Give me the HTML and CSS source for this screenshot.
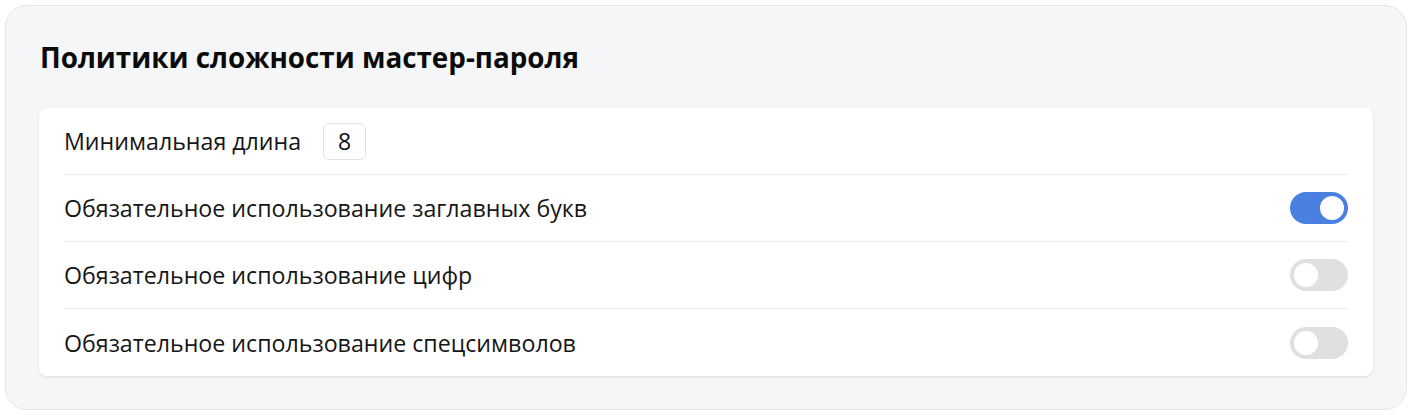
FILE: index.html
```html
<!DOCTYPE html>
<html lang="ru">
<head>
<meta charset="utf-8">
<link rel="stylesheet" href="styles.css">
</head>
<body>
<section class="panel">
  <h2 class="panel-title">Политики сложности мастер-пароля</h2>
  <div class="card">
    <div class="row">
      <span class="label">Минимальная длина</span>
      <span class="num-input">8</span>
    </div>
    <div class="row">
      <span class="label">Обязательное использование заглавных букв</span>
      <span class="toggle on"><span class="knob"></span></span>
    </div>
    <div class="row">
      <span class="label">Обязательное использование цифр</span>
      <span class="toggle"><span class="knob"></span></span>
    </div>
    <div class="row last">
      <span class="label">Обязательное использование спецсимволов</span>
      <span class="toggle"><span class="knob"></span></span>
    </div>
  </div>
</section>
</body>
</html>
```
FILE: styles.css
```css
* { box-sizing: border-box; }
html, body { margin: 0; padding: 0; background: #ffffff; }
body {
  padding: 5px;
  font-family: "Open Sans", "Noto Sans", sans-serif;
  color: #111;
}
.panel {
  width: 1402px;
  height: 405px;
  background: #f5f6f8;
  border: 1px solid #e4e5e8;
  border-radius: 22px;
  padding: 31px 33px 33px 33px;
}
.panel-title {
  margin: 0 0 31px 1px;
  font-size: 27.8px;
  line-height: 40px;
  font-weight: 700;
  color: #0b0b0b;
}
.card {
  background: #fff;
  border-radius: 8px;
  box-shadow: 0 1px 3px rgba(0,0,0,0.10);
  padding: 0 25px;
}
.row {
  height: 67px;
  display: flex;
  align-items: center;
  justify-content: flex-start;
  border-bottom: 1px solid #ededed;
}
.row.last { border-bottom: none; }
.label {
  font-size: 23.2px;
  color: #161616;
}
.num-input {
  margin-left: 22px;
  width: 43px;
  height: 37px;
  border: 1px solid #e2e2e2;
  border-radius: 6px;
  display: flex;
  align-items: center;
  justify-content: center;
  font-size: 23px;
}
.toggle {
  margin-left: auto;
  width: 58px;
  height: 32px;
  border-radius: 16px;
  background: #e0e0e0;
  padding: 4px;
  display: flex;
  justify-content: flex-start;
}
.toggle.on { background: #4a80e0; justify-content: flex-end; }
.knob {
  width: 24px;
  height: 24px;
  border-radius: 50%;
  background: #fff;
}
```
